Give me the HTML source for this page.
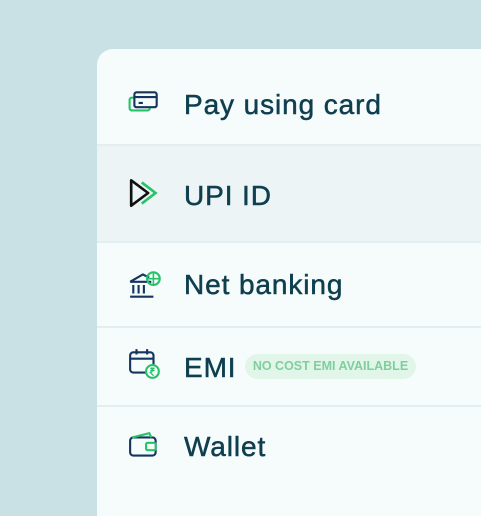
<!DOCTYPE html><html><head><style>
html,body{margin:0;width:481px;height:516px;background:#c9e1e5;overflow:hidden;font-family:"Liberation Sans",sans-serif}
.card{position:absolute;left:97px;top:49px;width:384px;height:467px;background:#f6fcfc;border-radius:16px 0 0 0;overflow:hidden}
.row{position:absolute;left:0;width:384px;border-bottom:2px solid #e3eef0;box-sizing:border-box}
.t{position:absolute;left:87px;font-size:28px;color:#0f3f4f;letter-spacing:0.9px;-webkit-text-stroke:0.5px #0f3f4f}
svg{position:absolute;left:31px}
.badge{position:absolute;left:148px;top:305px;width:171px;height:25px;border-radius:13px;background:#e1f5e9;color:#7fcf9d;font-size:12.5px;font-weight:bold;line-height:25px;text-align:center}
</style></head><body><div class="card">
<div class="row" style="top:0;height:97px"></div>
<div class="row" style="top:97px;height:97px;background:#edf4f5"></div>
<div class="row" style="top:194px;height:85px"></div>
<div class="row" style="top:279px;height:79px"></div>
<svg style="top:41px" width="34" height="28" viewBox="0 0 32 26"><rect x="1.5" y="7" width="19" height="12" rx="2" fill="none" stroke="#27c36a" stroke-width="2"/><rect x="6" y="2" width="21" height="14" rx="2" fill="#f6fcfc" stroke="#15355e" stroke-width="2"/><line x1="6" y1="6.5" x2="27" y2="6.5" stroke="#15355e" stroke-width="2"/><line x1="10" y1="12" x2="14" y2="12" stroke="#15355e" stroke-width="2"/></svg>
<div class="t" style="top:40px">Pay using card</div>
<svg style="top:129px" width="36" height="30" viewBox="0 0 34 28"><path d="M3 2 L19 14 L3 26 Z" fill="none" stroke="#111" stroke-width="2.5" stroke-linejoin="round"/><path d="M13 4 L26 14 L13 24" fill="none" stroke="#27c36a" stroke-width="2.5"/></svg>
<div class="t" style="top:131px">UPI ID</div>
<svg style="top:221px" width="36" height="30" viewBox="0 0 34 28"><path d="M2 11 L14 4 L20 7 M2 11 H22 M5 14 V22 M10 14 V22 M15 14 V22 M2 25 H24" fill="none" stroke="#15355e" stroke-width="2"/><circle cx="24" cy="8" r="6" fill="none" stroke="#27c36a" stroke-width="2"/><path d="M18 8 H30 M24 2 V14" stroke="#27c36a" stroke-width="1.5"/></svg>
<div class="t" style="top:220px">Net banking</div>
<svg style="top:299px" width="34" height="32" viewBox="0 0 32 30"><rect x="2" y="4" width="22" height="19" rx="3" fill="none" stroke="#15355e" stroke-width="2"/><path d="M2 10 H24 M8 1 V6 M18 1 V6" stroke="#15355e" stroke-width="2"/><circle cx="23" cy="22" r="6" fill="#f6fcfc" stroke="#27c36a" stroke-width="2"/><path d="M21 19 H25 M21 21 H25 M22 19 Q25 21 21 23 L24 26" fill="none" stroke="#27c36a" stroke-width="1.3"/></svg>
<div class="t" style="top:303px">EMI</div>
<div class="badge">NO COST EMI AVAILABLE</div>
<svg style="top:383px" width="34" height="30" viewBox="0 0 32 28"><rect x="2" y="5" width="24" height="17" rx="3" fill="none" stroke="#15355e" stroke-width="2"/><path d="M4 5 L20 1 L22 5" fill="none" stroke="#27c36a" stroke-width="2"/><rect x="17" y="10" width="9" height="7" rx="1.5" fill="#f6fcfc" stroke="#27c36a" stroke-width="2"/></svg>
<div class="t" style="top:382px">Wallet</div>
</div></body></html>
